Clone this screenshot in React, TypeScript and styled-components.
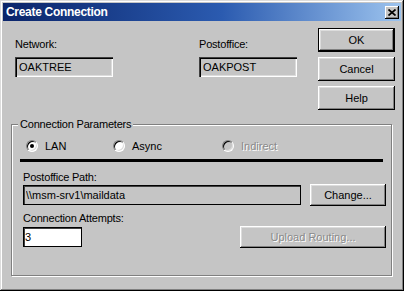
import React from 'react';
import styled, { createGlobalStyle, css } from 'styled-components';

const GlobalStyle = createGlobalStyle`
  html, body { margin: 0; padding: 0; background: #c5c5c5; }
  body { font-family: "Liberation Sans", Arial, sans-serif; }
`;

const FACE = '#c5c5c5';

const Window = styled.div`
  width: 404px;
  height: 291px;
  box-sizing: border-box;
  padding: 3px;
  background: ${FACE};
  box-shadow: inset -1px -1px #000, inset 1px 1px #dcdcdc, inset -2px -2px #808080, inset 2px 2px #fff;
  display: flex;
  flex-direction: column;
  font-family: "Liberation Sans", Arial, sans-serif;
  font-size: 11px;
  color: #000;
`;

const TitleBar = styled.div`
  height: 18px;
  flex: none;
  display: flex;
  align-items: center;
  justify-content: space-between;
  padding: 0 2px 0 3px;
  background: linear-gradient(to right, #0a246a 0%, #2b5bb0 55%, #9cc3ee 100%);
`;

const Title = styled.span`
  color: #fff;
  font-weight: bold;
  font-size: 12px;
  letter-spacing: -0.3px;
`;

const CloseButton = styled.div`
  width: 14px;
  height: 13px;
  background: ${FACE};
  box-shadow: inset -1px -1px #000, inset 1px 1px #fff, inset -2px -2px #808080;
  display: flex;
  align-items: center;
  justify-content: center;
`;

const Content = styled.div`
  padding: 7px 9px 0 8px;
  display: flex;
  flex-direction: column;
`;

const TopRow = styled.div`
  display: flex;
  padding-left: 4px;
  margin-right: -3px;
`;

const Field = styled.div<{ $offset?: number }>`
  display: flex;
  flex-direction: column;
  width: 98px;
  padding-top: 9px;
  gap: 6px;
  margin-left: ${(p) => p.$offset ?? 0}px;
`;

const Label = styled.div<{ $gap?: number }>`
  line-height: 14px;
  margin-top: ${(p) => p.$gap ?? 0}px;
  letter-spacing: -0.2px;
`;

const TextBox = styled.input<{ $variant: 'sunken' | 'boxed' | 'white' }>`
  box-sizing: border-box;
  height: 20px;
  margin: 0;
  font-family: "Liberation Sans", Arial, sans-serif;
  font-size: 11px;
  color: #000;
  outline: none;
  ${(p) =>
    p.$variant === 'sunken'
      ? css`
          border: none;
          padding: 0 0 0 4px;
          background: ${FACE};
          box-shadow: inset 1px 1px #404040, inset 2px 2px #000, inset -1px -1px #fff, inset -2px -2px #dcdcdc;
        `
      : css`
          border: 1px solid #000;
          padding: 0 0 0 ${p.$variant === 'white' ? 1 : 2}px;
          background: ${p.$variant === 'white' ? '#fff' : FACE};
          box-shadow: inset 1px 1px #404040;
        `}
`;

const ButtonColumn = styled.div`
  margin-left: auto;
  display: flex;
  flex-direction: column;
  gap: 5px;
`;

const PushButton = styled.button<{ $w: number; $h?: number; $default?: boolean }>`
  width: ${(p) => p.$w}px;
  height: ${(p) => p.$h ?? 22}px;
  box-sizing: border-box;
  margin: 0;
  padding: 0;
  font-family: "Liberation Sans", Arial, sans-serif;
  font-size: 11px;
  color: #000;
  background: ${FACE};
  border: ${(p) => (p.$default ? '1px solid #000' : 'none')};
  box-shadow: inset -1px -1px #000, inset 1px 1px #fff, inset -2px -2px #808080, inset 2px 2px #dcdcdc;
  &:disabled {
    color: #8a8a8a;
    text-shadow: 1px 1px 0 #fff;
  }
`;

const Group = styled.fieldset`
  margin: 7px 0 0 0;
  padding: 0 5px 27px 11px;
  min-width: 0;
  border: 1px solid #808080;
  box-shadow: 1px 1px 0 #fff, inset 1px 1px 0 #fff;
`;

const Legend = styled.legend`
  margin-left: -5px;
  padding: 0 2px;
  line-height: 14px;
  background: ${FACE};
  letter-spacing: -0.2px;
`;

const RadioRow = styled.div`
  display: grid;
  grid-template-columns: 87px 109px auto;
  align-items: center;
  height: 14px;
  padding-left: 3px;
  margin-top: 8px;
`;

const RadioItem = styled.label<{ $disabled?: boolean }>`
  display: flex;
  align-items: center;
  gap: 7px;
  line-height: 14px;
  color: ${(p) => (p.$disabled ? '#8a8a8a' : '#000')};
  text-shadow: ${(p) => (p.$disabled ? '1px 1px 0 #fff' : 'none')};
`;

const RadioCircle = styled.span<{ $checked?: boolean; $disabled?: boolean }>`
  position: relative;
  width: 12px;
  height: 12px;
  box-sizing: border-box;
  border-radius: 50%;
  border: 1px solid;
  border-color: #808080 #fff #fff #808080;
  background: ${(p) => (p.$disabled ? FACE : '#fff')};
  box-shadow: inset 1px 1px #000, inset -1px -1px #dcdcdc;
  &::after {
    content: '';
    display: ${(p) => (p.$checked ? 'block' : 'none')};
    position: absolute;
    left: 3px;
    top: 3px;
    width: 4px;
    height: 4px;
    border-radius: 50%;
    background: #000;
  }
`;

const Rule = styled.div`
  height: 3px;
  background: #000;
  margin: 6px 3px 0 -3px;
`;

const SplitRow = styled.div<{ $gap?: number }>`
  display: flex;
  align-items: center;
  justify-content: space-between;
  height: 22px;
  margin-top: ${(p) => p.$gap ?? 0}px;
`;

export default function App() {
  return (
    <>
      <GlobalStyle />
      <Window>
        <TitleBar>
          <Title>Create Connection</Title>
          <CloseButton>
            <svg width="8" height="7" viewBox="0 0 8 7">
              <path d="M0.5 0.5 L7.5 6.5 M7.5 0.5 L0.5 6.5" stroke="#000" strokeWidth="1.7" />
            </svg>
          </CloseButton>
        </TitleBar>
        <Content>
          <TopRow>
            <Field>
              <Label>Network:</Label>
              <TextBox $variant="sunken" readOnly value="OAKTREE" />
            </Field>
            <Field $offset={86}>
              <Label>Postoffice:</Label>
              <TextBox $variant="sunken" readOnly value="OAKPOST" />
            </Field>
            <ButtonColumn>
              <PushButton $w={77} $h={24} $default>OK</PushButton>
              <PushButton $w={77} $h={24}>Cancel</PushButton>
              <PushButton $w={77} $h={24}>Help</PushButton>
            </ButtonColumn>
          </TopRow>
          <Group>
            <Legend>Connection Parameters</Legend>
            <RadioRow>
              <RadioItem>
                <RadioCircle $checked />
                LAN
              </RadioItem>
              <RadioItem>
                <RadioCircle />
                Async
              </RadioItem>
              <RadioItem $disabled>
                <RadioCircle $disabled />
                Indirect
              </RadioItem>
            </RadioRow>
            <Rule />
            <Label $gap={8}>Postoffice Path:</Label>
            <SplitRow>
              <TextBox $variant="boxed" readOnly value="\\msm-srv1\maildata" style={{ width: 278 }} />
              <PushButton $w={76}>Change...</PushButton>
            </SplitRow>
            <Label $gap={5}>Connection Attempts:</Label>
            <SplitRow $gap={1}>
              <TextBox $variant="white" readOnly value="3" style={{ width: 59 }} />
              <PushButton $w={146} disabled>
                Upload Routing...
              </PushButton>
            </SplitRow>
          </Group>
        </Content>
      </Window>
    </>
  );
}
